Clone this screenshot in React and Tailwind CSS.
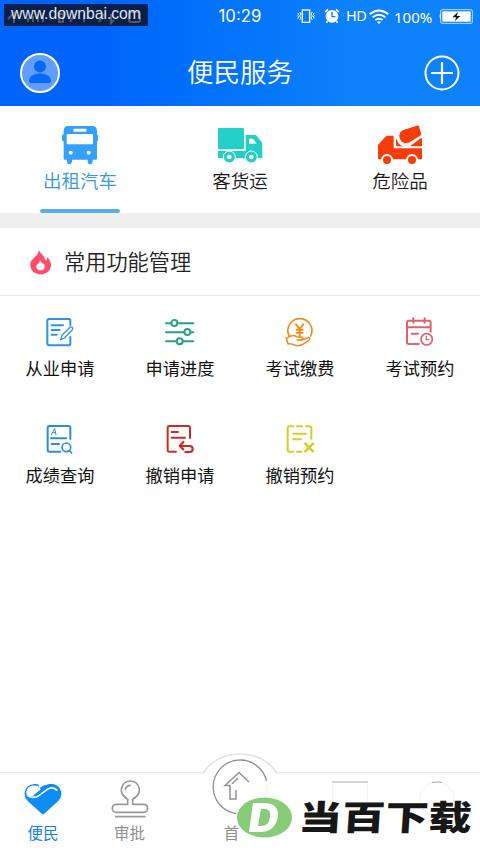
const FONT = "font-['Noto_Sans','Noto_Sans_CJK_SC',sans-serif]";
const CJK = "font-['Noto_Sans_CJK_SC',sans-serif]";

function BusIcon() {
  return (
    <svg width="40" height="42" viewBox="0 0 120 126" fill="#34a0fb">
      <rect x="6" y="31" width="108" height="21" rx="5" />
      <path d="M24 6h73q14 0 14 16v82q0 3-4 3H15q-4 0-4-3V22Q11 6 24 6z" />
      <path d="M21 104h15v9q-2 8-8 8t-7-8zM83 104h15v9q-2 8-8 8t-7-8z" />
      <g fill="#fff">
        <rect x="40" y="14" width="39" height="9" rx="2" />
        <rect x="20" y="30" width="79" height="31" rx="3" />
        <circle cx="32" cy="86" r="6" />
        <circle cx="86" cy="86" r="6" />
      </g>
    </svg>
  );
}

function TruckIcon() {
  return (
    <svg width="46" height="42" viewBox="0 0 138 126" fill="#24cfc7">
      <rect x="3" y="12" width="78" height="64" rx="3" />
      <path d="M86 33h25q6 0 9 4l13 16q3 4 3 9v41H3V81h83z" />
      <path d="M96 44v15h23l-8-11q-3-4-7-4z" fill="#fff" />
      <g stroke="#fff" strokeWidth="3">
        <circle cx="37" cy="99" r="18" />
        <circle cx="103" cy="99" r="18" />
      </g>
      <circle cx="37" cy="99" r="7" fill="#fff" />
      <circle cx="103" cy="99" r="7" fill="#fff" />
    </svg>
  );
}

function MixerIcon() {
  return (
    <svg width="46" height="42" viewBox="0 0 138 126" fill="#f63c0b">
      <path d="M3 63l22-25q4-3 9-3h12q4 0 4 4v34h85v33H6q-3 0-3-4z" />
      <path d="M59 45q5 21 22 22h18l32-24q4-2 4 2v22H61q-4 0-4-4V48z" />
      <path d="M75 18l46-15q4-1 6 3l7 23q1 4-2 6L97 57q-15 7-25-4-15-20 3-35z" stroke="#fff" strokeWidth="3" />
      <g stroke="#fff" strokeWidth="6">
        <circle cx="30" cy="108" r="15" />
        <circle cx="105" cy="108" r="15" />
      </g>
    </svg>
  );
}

function FlameIcon() {
  return (
    <svg width="22" height="26" viewBox="0 0 66 78" fill="#ff4c6a">
      <path d="M26 1c2 12 18 18 20 33 4-1 6-5 6-10 7 8 11 16 11 24 0 16-13 28-31 28S1 64 1 48c0-13 8-18 16-26 7-7 10-14 9-21z" />
      <path d="M29 33c2 5 7 5 8 11 5-1 8 4 7 9 0 7-5 11-12 11s-13-4-13-11c0-6 5-8 8-11 2-2 2-5 2-9z" fill="#fff" />
    </svg>
  );
}

function ActionIcon({ color, children }) {
  return (
    <svg width="30" height="30" viewBox="0 0 90 90" fill="none" stroke={color} strokeWidth="6" strokeLinecap="round" strokeLinejoin="round">
      {children}
    </svg>
  );
}

const tabs = [
  { label: '出租汽车', icon: <BusIcon />, active: true },
  { label: '客货运', icon: <TruckIcon /> },
  { label: '危险品', icon: <MixerIcon /> },
];

const actions = [
  {
    label: '从业申请',
    icon: (
      <ActionIcon color="#2d93e8">
        <path d="M76 24V10q0-4-5-4H12q-5 0-5 5v68q0 6 6 6h58q5 0 5-5V60" />
        <path d="M20 25h34M20 39h24M20 53h15" />
        <path d="M47 68l4-13 24-24q3-3 6 0l1 1q2 3 0 6L58 63z" strokeWidth="4" />
      </ActionIcon>
    ),
  },
  {
    label: '申请进度',
    icon: (
      <ActionIcon color="#2ba183">
        <path d="M3 19h16M38 19h47M3 46h55M77 46h8M3 73h31M54 73h31" />
        <circle cx="28" cy="18" r="9" />
        <circle cx="67" cy="45" r="9" />
        <circle cx="44" cy="73" r="9" />
      </ActionIcon>
    ),
  },
  {
    label: '考试缴费',
    icon: (
      <ActionIcon color="#ee8c21">
        <path d="M12 56A36 36 0 1 1 77 57" strokeWidth="5" />
        <path d="M33 22l11 14 11-14M44 36v22M35 38h18M35 47h18" />
        <path d="M4 64c10-7 21-12 30-5 6 3 18-1 20 4 2 5-9 6-17 6 13 3 22-4 32-7 6-1 7 4 3 7-10 8-20 17-34 17-10 0-17-8-29-5z" strokeWidth="4.5" />
      </ActionIcon>
    ),
  },
  {
    label: '考试预约',
    icon: (
      <ActionIcon color="#e4616c">
        <path d="M77 44V16q0-5-5-5H12q-6 0-6 5v60q0 5 6 5h29M6 31h70M25 4v13M59 4v13M20 50h19" />
        <circle cx="65" cy="67" r="17" strokeWidth="5" />
        <path d="M64 58v10h7" strokeWidth="4" />
      </ActionIcon>
    ),
  },
  {
    label: '成绩查询',
    icon: (
      <ActionIcon color="#298ee0">
        <path d="M76 45V12q0-6-6-6H13q-5 0-5 6v66q0 5 5 5h33M18 43h46M20 60h22" />
        <path d="M19 32l10-18 4 18M23 26h9" strokeWidth="3" />
        <circle cx="64" cy="70" r="13" strokeWidth="5" />
        <path d="M73 80l7 7" strokeWidth="5" />
      </ActionIcon>
    ),
  },
  {
    label: '撤销申请',
    icon: (
      <ActionIcon color="#d62620">
        <path d="M75 42V12q0-6-6-6H13q-5 0-5 6v66q0 5 5 5h20M20 24h19M20 41h40" />
        <path d="M55 54L44 66l11 10M46 66h28q9 0 9 9t-9 9H61" strokeWidth="6.5" />
      </ActionIcon>
    ),
  },
  {
    label: '撤销预约',
    icon: (
      <ActionIcon color="#dccb20">
        <path d="M25 7H14q-6 0-6 6v64q0 6 6 6h11M36 7h15M63 7h10q6 0 6 6v31M36 83h13M25 29h38M25 46h23" />
        <path d="M61 59l23 23M84 59L61 82" strokeWidth="8" />
      </ActionIcon>
    ),
  },
];

function StatusBar() {
  return (
    <div className="relative flex h-8 items-center justify-end pr-[7px] font-['Inter',sans-serif] text-white">
      <div className="absolute inset-x-0 pt-px text-center text-[16.8px]">10:29</div>
      <div className="absolute left-1 top-1 h-[22px] w-36 overflow-hidden bg-[#091f4c]">
        {/* signal bars and small glyphs dimmed behind the label */}
        <svg className="absolute left-0 top-0" width="144" height="22" viewBox="0 0 144 22" fill="none" stroke="#56565c" strokeWidth="2">
          <path d="M4 15l6-6v10M24 18v-4M29 18v-6M34 18v-8M39 18V9M55 10h4v8h-4zM66 18l5-8M80 10v8M95 18l5-8M107 10v9l3-3" />
          <rect x="125" y="8" width="11" height="10" rx="2" />
        </svg>
        <span className="absolute left-[7px] top-0 whitespace-nowrap font-['Liberation_Sans',sans-serif] text-[15.7px] leading-[19px] text-[#e0e7f2]">www.downbai.com</span>
      </div>
      <svg className="mr-[9px]" width="18" height="16" viewBox="0 0 54 48" fill="none" stroke="#fff" strokeWidth="4">
        <rect x="16" y="6" width="22" height="37" />
        <path d="M8 12l4 6-4 6 4 6-4 6M2 15l3 4-3 4 3 4-3 5M46 12l-4 6 4 6-4 6 4 6M52 15l-3 4 3 4-3 4 3 5" strokeWidth="3" />
      </svg>
      <svg className="mr-1.5" width="16" height="16" viewBox="0 0 48 48">
        <path d="M3 12L12 4M45 12L36 4M11 39l-4 5M37 39l4 5" stroke="#fff" strokeWidth="5" />
        <circle cx="24" cy="25" r="19" fill="#fff" />
        <path d="M24 12v14h10" fill="none" stroke="#0b7cfb" strokeWidth="4" />
      </svg>
      <span className={`${FONT} mr-1 w-[19px] text-[14.5px] tracking-[-0.5px]`}>HD</span>
      <svg className="mr-[5px]" width="20" height="15" viewBox="0 0 60 45" fill="none" stroke="#fff" strokeWidth="6">
        <path d="M2 16q28-23 56 0M11 25q19-16 38 0M19 33q11-8 22 0" />
        <path d="M24 39q6-4 12 0l-6 6z" fill="#fff" stroke="none" />
      </svg>
      <span className={`${FONT} mr-[5px] w-10 whitespace-nowrap pt-0.5 text-[15px] leading-5`}>100%</span>
      <svg width="34" height="15" viewBox="0 0 102 45">
        <rect x="5" y="2" width="95" height="41" rx="4" fill="none" stroke="#b9ddfa" strokeWidth="3" />
        <rect x="10" y="7" width="85" height="31" fill="#fff" />
        <path d="M5 15H3q-3 7 0 15h2z" fill="#fff" />
        <path d="M57 9L40 25h12l-5 12 17-16H53z" fill="#111" />
      </svg>
    </div>
  );
}

function Header() {
  return (
    <header className="h-[106px] bg-linear-to-r from-[#0064fb] from-20% to-[#0e82fb] to-75%">
      <StatusBar />
      <div className="flex h-[82px] items-center justify-between px-5">
        <svg width="40" height="40" viewBox="0 0 40 40">
          <circle cx="20" cy="20" r="19" fill="#629dfb" stroke="#fff" strokeWidth="2" />
          <circle cx="20" cy="13.5" r="6" fill="#0868f8" />
          <path d="M9 28c0-5 5-7.5 11-7.5S31 23 31 28q0 2-3 2H12q-3 0-3-2z" fill="#0868f8" />
        </svg>
        <h1 className={`${CJK} mr-1 pb-1 text-[26.5px] font-[350] leading-8 text-white`}>便民服务</h1>
        <svg width="36" height="36" viewBox="0 0 36 36" fill="none" stroke="#fff" strokeWidth="2">
          <circle cx="18" cy="18" r="16.5" />
          <path d="M7 18h22M18 7v22" strokeWidth="2.2" />
        </svg>
      </div>
    </header>
  );
}

function NavItem({ label, color, children }) {
  return (
    <div className={`flex flex-col items-center pt-1.5 ${color}`}>
      <div className="flex h-10 items-center">{children}</div>
      <span className="mt-[3px] text-[15.5px] leading-5">{label}</span>
    </div>
  );
}

function BottomNav() {
  return (
    <nav className="relative grid h-[81px] grid-cols-[86px_87px_133px_87px_87px] border-t border-[#e4e4e4] bg-white">
      <NavItem label="便民" color="text-[#1682e8]">
        <svg width="38" height="32" viewBox="0 0 114 96">
          <path d="M57 95L14 57Q-2 41 3 24 9 5 31 3q13-1 22 5L70 5q26-7 38 12 11 20-6 38z" fill="#0d8cf5" />
          <path d="M43 12Q20 5 11 21q-6 15 8 21 14 4 27-5L70 19q17-11 30 4" fill="none" stroke="#fff" strokeWidth="5" />
          <path d="M43 12Q20 5 11 21q-4 12 5 18 8 4 17-4L51 20z" fill="#fff" />
          <path d="M44 0h18v4L45 17z" fill="#fff" />
          <path d="M33 36L62 14Q72 5 84 5" fill="none" stroke="#0d8cf5" strokeWidth="5" strokeLinecap="round" />
        </svg>
      </NavItem>
      <NavItem label="审批" color="text-[#8f8f8f]">
        <svg width="38" height="38" viewBox="0 0 114 114" fill="none" stroke="#999" strokeWidth="5">
          <path d="M50 73V58Q29 45 31 27 36 3 58 3t27 24q2 18-20 31v15h33q12 0 12 12t-12 12H16Q4 97 4 85t12-12z" />
          <path d="M43 29q2-11 14-13M14 110h88" strokeLinecap="round" />
        </svg>
      </NavItem>
      <div className="relative flex flex-col items-center">
        <svg className="-mt-5" width="84" height="69" viewBox="0 0 84 69" fill="none">
          <path d="M5 20q13-19 37-19t37 19" fill="#fff" stroke="#e2e2e2" strokeWidth="1.5" />
          <circle cx="42" cy="34" r="27" fill="#fff" stroke="#f2f2f2" />
          <path d="M68.500 28A27 27 0 1 0 38 60.700" stroke="#929292" strokeWidth="1.3" />
          <path d="M51 29L41 19.500 27 32.500h5V46h6v-9" stroke="#929292" strokeWidth="1.5" />
          <path d="M34 31l6-6" stroke="#929292" strokeWidth="1.5" />
        </svg>
        <span className="mr-4 text-[15.5px] leading-5 text-[#8f8f8f]">首</span>
      </div>
      <div className="flex justify-center pt-[7px]">
        <svg width="36" height="38" viewBox="0 0 36 38" fill="none">
          <path d="M.5 2v34h35V2" stroke="#f3f3f3" />
          <path d="M0 2h36" stroke="#aaa" />
        </svg>
      </div>
      <div className="flex justify-center pt-[7px]">
        <svg width="36" height="38" viewBox="0 0 36 38" fill="none">
          <circle cx="18" cy="19" r="17" stroke="#f3f3f3" />
          <path d="M13 2.500q5-1 10 0" stroke="#aaa" />
        </svg>
      </div>
      <Watermark />
    </nav>
  );
}

function Watermark() {
  return (
    <div className="absolute left-[236px] top-[23px] flex items-start">
      <svg width="57" height="43" viewBox="0 0 57 43">
        <ellipse cx="28.5" cy="21.5" rx="27.500" ry="20" fill="#88cc78" />
        <path fillRule="evenodd" d="M17 7h13q13 1 12 14-3 14-16 15H13zm8 6l-3 17h3q8 0 9-9 1-8-5-8z" fill="#fff" />
      </svg>
      <span className="-mt-0.5 ml-1.5 origin-left -skew-x-3 scale-x-[1.265] whitespace-nowrap text-[34.2px] font-black leading-[42px] text-[#171717]">当百下载</span>
    </div>
  );
}

export default function App() {
  return (
    <div className={`${CJK} flex h-[853px] w-[480px] flex-col overflow-hidden bg-white`}>
      <Header />

      <div className="grid h-[107px] grid-cols-3">
        {tabs.map((tab) => (
          <div key={tab.label} className="flex flex-col items-center pt-[18px]">
            {tab.icon}
            <span className={`mt-0.5 text-[18.5px] font-[350] leading-6 ${tab.active ? 'text-[#3199e8]' : 'text-[#181818]'}`}>
              {tab.label}
            </span>
            {tab.active && <div className="mt-auto h-1 w-20 rounded-full bg-[#5aaee8]" />}
          </div>
        ))}
      </div>

      <div className="h-[15px] bg-[#efefef]" />

      <div className="flex h-[68px] items-center gap-3 border-b border-[#e8e8e8] pl-[30px]">
        <FlameIcon />
        <h2 className="pb-0.5 text-[21.2px] font-[350] leading-8 text-[#222]">常用功能管理</h2>
      </div>

      <div className="grid grid-cols-4">
        {actions.map((action) => (
          <div key={action.label} className="flex h-[107px] flex-col items-center pt-[21px]">
            {action.icon}
            <span className="mt-[9px] text-[17.2px] leading-6 text-[#111]">{action.label}</span>
          </div>
        ))}
      </div>

      <div className="flex-1" />
      <BottomNav />
    </div>
  );
}
